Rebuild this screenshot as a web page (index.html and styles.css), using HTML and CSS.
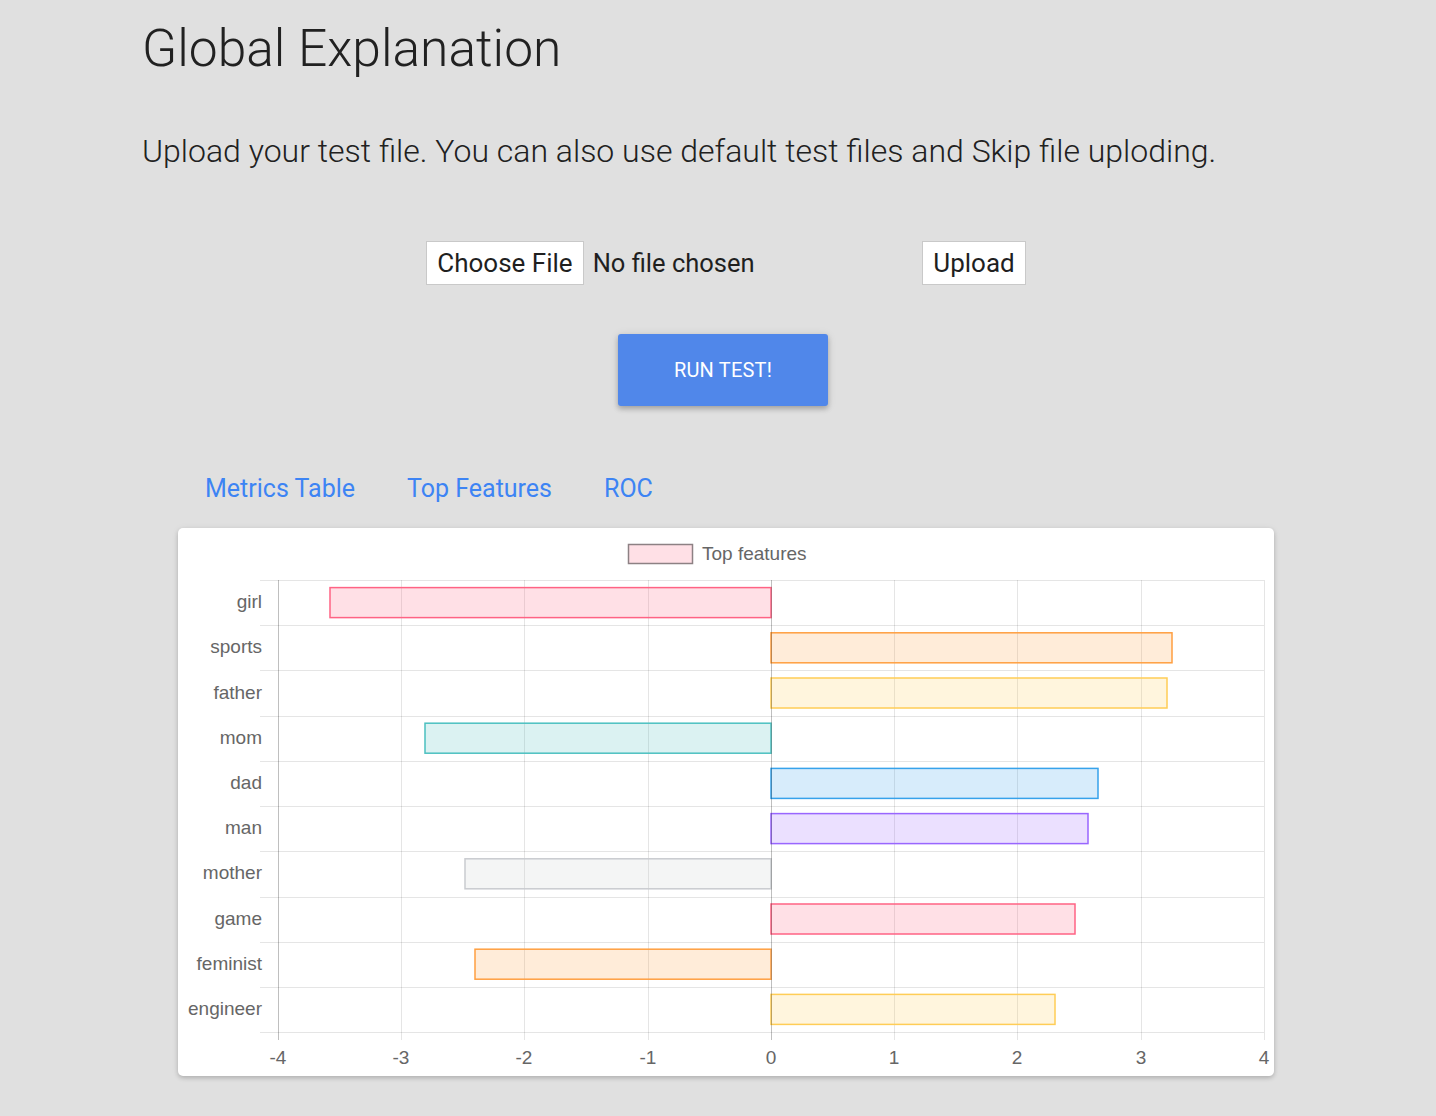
FILE: index.html
```html
<!DOCTYPE html>
<html lang="en">
<head>
<meta charset="utf-8">
<title>Global Explanation</title>
<link rel="stylesheet" href="styles.css">
</head>
<body>
<main class="container">
  <h1 class="title">Global Explanation</h1>
  <p class="subtitle">Upload your test file. You can also use default test files and Skip file uploding.</p>

  <div class="upload-row">
    <div class="file-input">
      <span class="btn-plain">Choose File</span>
      <span class="file-name">No file chosen</span>
    </div>
    <span class="btn-plain">Upload</span>
  </div>

  <div class="run-row">
    <button class="run-btn">RUN TEST!</button>
  </div>

  <nav class="tabs">
    <a class="tab">Metrics Table</a>
    <a class="tab">Top Features</a>
    <a class="tab">ROC</a>
  </nav>

  <section class="card">
    <svg class="chart" width="1096" height="548" viewBox="0 0 1096 548">
      <!-- legend -->
      <rect x="450.5" y="16.5" width="64" height="19" fill="rgba(255,99,132,0.2)" stroke="#8d8184" stroke-width="1.5"/>
      <text class="legend-text" x="524" y="32">Top features</text>

      <!-- horizontal grid -->
      <g stroke="rgba(0,0,0,0.1)" stroke-width="1">
        <line x1="82" y1="52.5" x2="1086" y2="52.5"/>
        <line x1="82" y1="97.5" x2="1086" y2="97.5"/>
        <line x1="82" y1="142.5" x2="1086" y2="142.5"/>
        <line x1="82" y1="188.5" x2="1086" y2="188.5"/>
        <line x1="82" y1="233.5" x2="1086" y2="233.5"/>
        <line x1="82" y1="278.5" x2="1086" y2="278.5"/>
        <line x1="82" y1="323.5" x2="1086" y2="323.5"/>
        <line x1="82" y1="369.5" x2="1086" y2="369.5"/>
        <line x1="82" y1="414.5" x2="1086" y2="414.5"/>
        <line x1="82" y1="459.5" x2="1086" y2="459.5"/>
        <line x1="82" y1="504.5" x2="1086" y2="504.5"/>
      </g>
      <!-- vertical grid -->
      <g stroke="rgba(0,0,0,0.1)" stroke-width="1">
        <line x1="100.5" y1="52" x2="100.5" y2="512" stroke="rgba(0,0,0,0.25)"/>
        <line x1="223.5" y1="52" x2="223.5" y2="512"/>
        <line x1="346.5" y1="52" x2="346.5" y2="512"/>
        <line x1="470.5" y1="52" x2="470.5" y2="512"/>
        <line x1="716.5" y1="52" x2="716.5" y2="512"/>
        <line x1="839.5" y1="52" x2="839.5" y2="512"/>
        <line x1="963.5" y1="52" x2="963.5" y2="512"/>
        <line x1="1086.5" y1="52" x2="1086.5" y2="512"/>
      </g>

      <!-- bars -->
      <g stroke-width="1.5">
        <rect x="152" y="59.6" width="441" height="30" fill="rgba(255,99,132,0.2)" stroke="rgb(255,99,132)"/>
        <rect x="593" y="104.8" width="401" height="30" fill="rgba(255,159,64,0.2)" stroke="rgb(255,159,64)"/>
        <rect x="593" y="150" width="396" height="30" fill="rgba(255,205,86,0.2)" stroke="rgb(255,205,86)"/>
        <rect x="247" y="195.2" width="346" height="30" fill="rgba(75,192,192,0.2)" stroke="rgb(75,192,192)"/>
        <rect x="593" y="240.4" width="327" height="30" fill="rgba(54,162,235,0.2)" stroke="rgb(54,162,235)"/>
        <rect x="593" y="285.6" width="317" height="30" fill="rgba(153,102,255,0.2)" stroke="rgb(153,102,255)"/>
        <rect x="287" y="330.8" width="306" height="30" fill="rgba(201,203,207,0.2)" stroke="rgb(201,203,207)"/>
        <rect x="593" y="376" width="304" height="30" fill="rgba(255,99,132,0.2)" stroke="rgb(255,99,132)"/>
        <rect x="297" y="421.2" width="296" height="30" fill="rgba(255,159,64,0.2)" stroke="rgb(255,159,64)"/>
        <rect x="593" y="466.4" width="284" height="30" fill="rgba(255,205,86,0.2)" stroke="rgb(255,205,86)"/>
      </g>

      <!-- zero line -->
      <line x1="593.5" y1="52" x2="593.5" y2="512" stroke="rgba(0,0,0,0.25)" stroke-width="1"/>

      <!-- y labels -->
      <g class="axis-text" text-anchor="end">
        <text x="84" y="80">girl</text>
        <text x="84" y="125">sports</text>
        <text x="84" y="171">father</text>
        <text x="84" y="216">mom</text>
        <text x="84" y="261">dad</text>
        <text x="84" y="306">man</text>
        <text x="84" y="351">mother</text>
        <text x="84" y="397">game</text>
        <text x="84" y="442">feminist</text>
        <text x="84" y="487">engineer</text>
      </g>

      <!-- x labels -->
      <g class="axis-text" text-anchor="middle">
        <text x="100" y="536">-4</text>
        <text x="223" y="536">-3</text>
        <text x="346" y="536">-2</text>
        <text x="470" y="536">-1</text>
        <text x="593" y="536">0</text>
        <text x="716" y="536">1</text>
        <text x="839" y="536">2</text>
        <text x="963" y="536">3</text>
        <text x="1086" y="536">4</text>
      </g>
    </svg>
  </section>
</main>
</body>
</html>
```

FILE: styles.css
```css
html, body {
  margin: 0;
  padding: 0;
}

body {
  background: #e0e0e0;
  font-family: Roboto, "Liberation Sans", Arial, sans-serif;
  color: #212121;
  min-height: 1116px;
}

.container {
  width: 1166px;
  margin-left: 142px;
  padding-top: 16px;
}

.title {
  margin: 0;
  font-size: 51.5px;
  line-height: 66px;
  font-weight: 300;
  color: #212121;
}

.subtitle {
  margin: 50px 0 0;
  font-size: 32px;
  line-height: 38px;
  font-weight: 300;
  color: #212121;
}

.upload-row {
  margin-top: 71px;
  display: flex;
  justify-content: center;
  align-items: center;
  padding-left: 2px;
}

.file-input {
  width: 496px;
  display: flex;
  align-items: center;
  gap: 9px;
}

.btn-plain {
  box-sizing: border-box;
  height: 44px;
  padding: 0 10px;
  display: inline-flex;
  align-items: center;
  background: #ffffff;
  border: 1px solid #c9c9c9;
  font-size: 26px;
  color: #1f1f1f;
}

.file-name {
  font-size: 25.5px;
  color: #1f1f1f;
}

.run-row {
  margin-top: 49px;
  display: flex;
  justify-content: center;
}

.run-btn {
  width: 210px;
  height: 72px;
  border: none;
  border-radius: 3px;
  background: #5087ea;
  color: #ffffff;
  font-family: Roboto, "Liberation Sans", Arial, sans-serif;
  font-size: 20px;
  font-weight: 400;
  letter-spacing: 0.2px;
  box-shadow: 0 3px 5px rgba(0, 0, 0, 0.22), 0 1px 10px rgba(0, 0, 0, 0.1);
  margin-right: 4px;
}

.tabs {
  margin-top: 67px;
  display: flex;
  gap: 52px;
  padding-left: 63px;
}

.tab {
  font-size: 25px;
  line-height: 32px;
  color: #3d84f4;
  text-decoration: none;
}

.card {
  margin: 23px 0 0 36px;
  width: 1096px;
  height: 548px;
  background: #ffffff;
  border-radius: 5px;
  box-shadow: 0 2px 4px rgba(0, 0, 0, 0.18), 0 1px 8px rgba(0, 0, 0, 0.06);
}

.chart {
  display: block;
}

.axis-text text,
.legend-text {
  font-family: "Liberation Sans", Arial, Helvetica, sans-serif;
  font-size: 19px;
  fill: #666666;
}
```
